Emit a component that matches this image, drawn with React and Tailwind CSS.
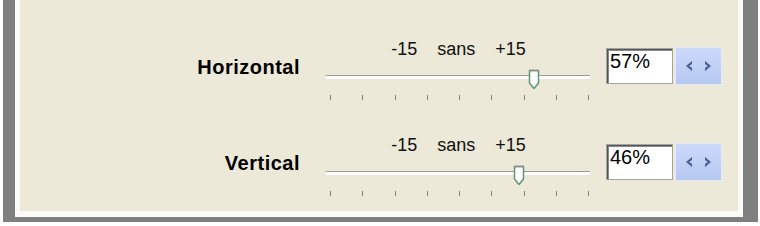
import React from "react";

const rows = [
  { label: "Horizontal", value: "57%", thumb: 203 },
  { label: "Vertical", value: "46%", thumb: 188 },
];

function Thumb({ left }) {
  return (
    <svg
      className="absolute top-[-7px]"
      style={{ left }}
      width="12"
      height="21"
      viewBox="0 0 12 21"
    >
      <path
        d="M1.5 1.5 H10.5 V14 L6 19.5 L1.5 14 Z"
        fill="#ffffff"
        stroke="#5f9670"
        strokeWidth="1.5"
        strokeLinejoin="round"
      />
      <path d="M1.5 1.5 H10.5" stroke="#8a8a8a" strokeWidth="1.5" />
    </svg>
  );
}

function SliderRow({ label, value, thumb }) {
  return (
    <div className="flex h-[96px]">
      <div className="w-[280px] pt-[17px] text-right text-[20px] leading-[20px] font-bold tracking-[0.5px] text-black">
        {label}
      </div>

      {/* slider */}
      <div className="ml-[25px] w-[265px]">
        <div className="flex justify-center gap-[20px] pl-[2px] text-[18px] leading-[18px] text-[#111]">
          <span>-15</span>
          <span>sans</span>
          <span>+15</span>
        </div>
        <div className="relative mt-[17px] h-[4px] rounded-l-[2px] border-t-[1.5px] border-[#9c9c94] bg-white">
          <Thumb left={thumb} />
        </div>
        <div className="mt-[16px] flex h-[5px] justify-between pl-[5px] pr-[1px]">
          {Array.from({ length: 9 }).map((_, i) => (
            <span key={i} className="h-[5px] w-[1px] bg-[#7d7d76]" />
          ))}
        </div>
      </div>

      {/* value box */}
      <div className="ml-[16px] mt-[8px] h-[36px] w-[67px] border border-[#a3a3a0] bg-white pl-[3px] pt-[2px] text-[20px] leading-[20px] text-black shadow-[inset_1px_1px_0_#555,inset_2px_2px_0_#888]">
        {value}
      </div>

      {/* spinner */}
      <div className="ml-[2px] mt-[7px] flex h-[38px] w-[47px] items-center justify-center gap-[11px] border border-[#e4eaf8] bg-gradient-to-b from-[#cbdafb] to-[#b6c8f2]">
        <svg width="8" height="12" viewBox="0 0 8 12">
          <path d="M7 1 L1 6 L7 11 L7 8 L4.2 6 L7 4 Z" fill="#4a5f8e" />
        </svg>
        <svg width="8" height="12" viewBox="0 0 8 12">
          <path d="M1 1 L7 6 L1 11 L1 8 L3.8 6 L1 4 Z" fill="#4a5f8e" />
        </svg>
      </div>
    </div>
  );
}

export default function App() {
  return (
    <div
      className="h-[226px] w-[760px] bg-white"
      style={{ fontFamily: '"Liberation Sans", Arial, sans-serif' }}
    >
      <div className="ml-[3px] h-[222px] w-[755px] border-b-[5px] border-l-[12px] border-r-[15px] border-[#7f7f7f]">
        <div className="h-full border-b-[6px] border-l-[5px] border-r-[5px] border-[#fbfbf8] bg-[#ece9d9] pt-[40px]">
          {rows.map((r) => (
            <SliderRow key={r.label} {...r} />
          ))}
        </div>
      </div>
    </div>
  );
}
